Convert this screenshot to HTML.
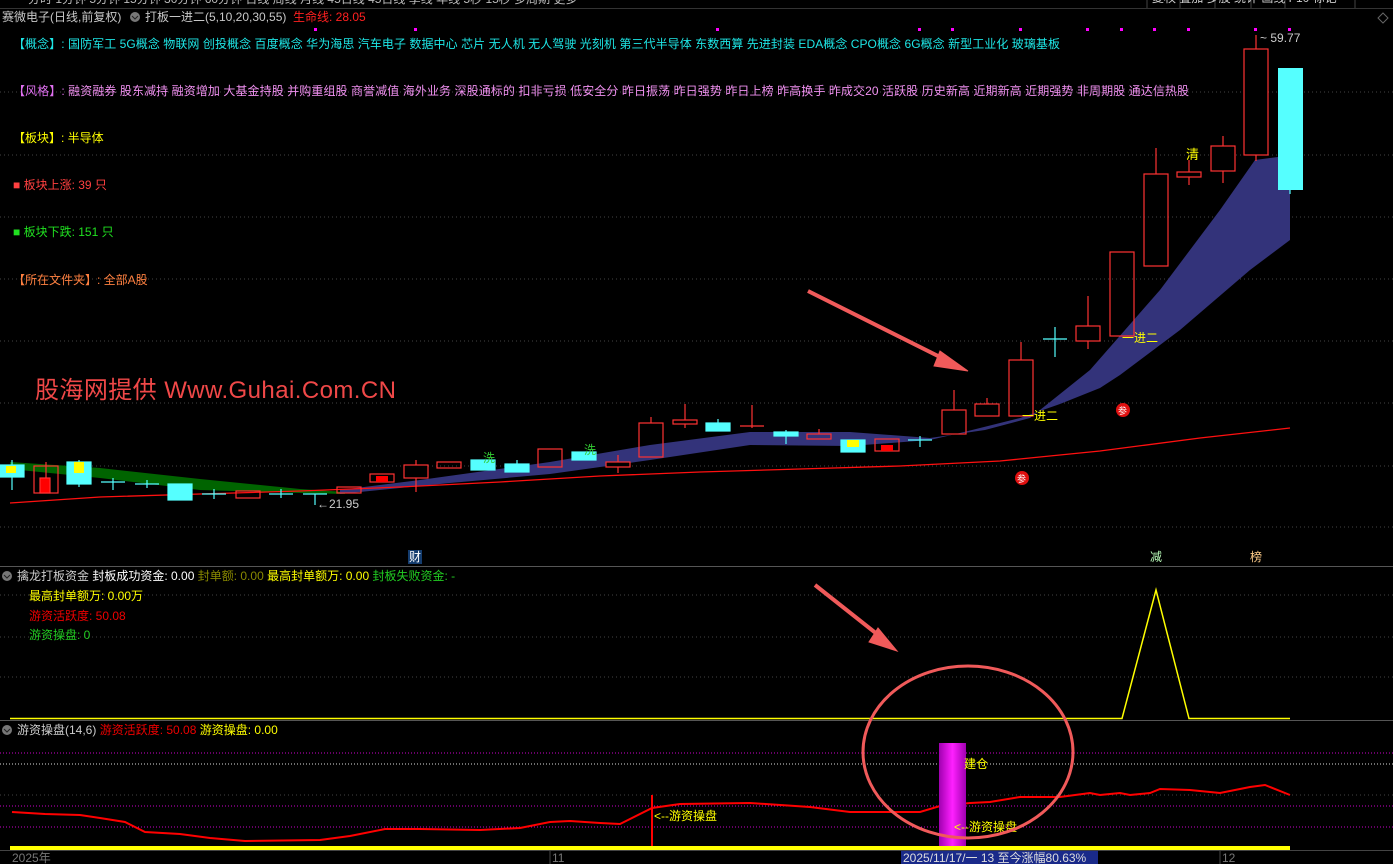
<!DOCTYPE html>
<html><head><meta charset="utf-8"><style>
html,body{margin:0;padding:0;background:#000;width:1393px;height:864px;overflow:hidden}
svg{display:block}
text{font-family:"Liberation Sans","Noto Sans CJK SC",sans-serif;font-size:12px}
</style></head><body>
<svg width="1393" height="864" xmlns="http://www.w3.org/2000/svg">
<rect width="1393" height="864" fill="#000"/>
<line x1="0" y1="8.5" x2="1393" y2="8.5" stroke="#333"/>
<text x="28" y="3" fill="#bbb">分时  1分钟  5分钟  15分钟  30分钟  60分钟  日线  周线  月线  45日线  45日线  季线  年线  5秒  15秒  多周期  更多</text>
<g stroke="#444"><line x1="1147" y1="0" x2="1147" y2="8"/><line x1="1180" y1="0" x2="1180" y2="8"/><line x1="1215" y1="0" x2="1215" y2="8"/><line x1="1251" y1="0" x2="1251" y2="8"/><line x1="1285" y1="0" x2="1285" y2="8"/><line x1="1320" y1="0" x2="1320" y2="8"/><line x1="1355" y1="0" x2="1355" y2="8"/></g>
<text x="1152" y="2" fill="#ccc">复权  叠加  多股  统计  画线  F10  标记</text>
<path d="M1383 13 l5 5 -5 5 -5 -5z" fill="none" stroke="#666"/>
<text x="2" y="21" fill="#c8c8c8">赛微电子(日线,前复权)</text>
<circle cx="135" cy="17" r="5" fill="#777"/><path d="M132 16 l3 3 3-3" stroke="#222" fill="none"/>
<text x="145" y="21" fill="#c8c8c8">打板一进二(5,10,20,30,55)</text>
<text x="293" y="21" fill="#ff2020">生命线: 28.05</text>
<g stroke="#444" stroke-dasharray="1,3">
<line x1="0" y1="92" x2="1393" y2="92"/><line x1="0" y1="155" x2="1393" y2="155"/><line x1="0" y1="217" x2="1393" y2="217"/><line x1="0" y1="279" x2="1393" y2="279"/><line x1="0" y1="341" x2="1393" y2="341"/><line x1="0" y1="403" x2="1393" y2="403"/><line x1="0" y1="466" x2="1393" y2="466"/><line x1="0" y1="527" x2="1393" y2="527"/>
<line x1="0" y1="595" x2="1393" y2="595"/><line x1="0" y1="637" x2="1393" y2="637"/><line x1="0" y1="677" x2="1393" y2="677"/>
<line x1="0" y1="795" x2="1393" y2="795"/>
</g>
<text x="13" y="48" fill="#1ee6e6" textLength="1047">【概念】: 国防军工 5G概念 物联网 创投概念 百度概念 华为海思 汽车电子 数据中心 芯片 无人机 无人驾驶 光刻机 第三代半导体 东数西算 先进封装 EDA概念 CPO概念 6G概念 新型工业化 玻璃基板</text>
<text x="13" y="95" fill="#e070f0" textLength="1176">【风格】: <tspan fill="#f090f0">融资融券 股东减持 融资增加 大基金持股 并购重组股 商誉减值 海外业务 深股通标的 扣非亏损 低安全分 昨日振荡 昨日强势 昨日上榜 昨高换手 昨成交20 活跃股 历史新高 近期新高 近期强势 非周期股 通达信热股</tspan></text>
<text x="13" y="142" fill="#ffff00">【板块】: 半导体</text>
<text x="13" y="189" fill="#ff4040">■ 板块上涨: 39 只</text>
<text x="13" y="236" fill="#20e020">■ 板块下跌: 151 只</text>
<text x="13" y="284" fill="#ff8040">【所在文件夹】: 全部A股</text>
<text x="35" y="398" fill="#f04848" style="font-size:24px" textLength="361">股海网提供 Www.Guhai.Com.CN</text>
<g fill="#ff00ff"><rect x="314" y="28" width="3" height="3"/><rect x="414" y="28" width="3" height="3"/><rect x="716" y="28" width="3" height="3"/><rect x="918" y="28" width="3" height="3"/><rect x="951" y="28" width="3" height="3"/><rect x="1019" y="28" width="3" height="3"/><rect x="1086" y="28" width="3" height="3"/><rect x="1120" y="28" width="3" height="3"/><rect x="1153" y="28" width="3" height="3"/><rect x="1187" y="28" width="3" height="3"/><rect x="1254" y="28" width="3" height="3"/><rect x="1288" y="28" width="3" height="3"/></g>
<polygon fill="#006400" points="10,462 100,468 200,479 300,489 345,492 345,494 300,493 200,490 100,478 10,469"/>
<polygon fill="#33337a" points="340,490 420,480 550,462 650,445 750,432 850,432 930,438 985,430 1030,418 1090,370 1160,290 1220,210 1255,160 1278,157 1290,155 1290,240 1250,270 1180,330 1120,375 1100,388 1060,404 1020,418 960,433 930,440 850,446 750,445 650,460 550,474 450,483 340,494"/>
<polyline fill="none" stroke="#ff1010" stroke-width="1.3" points="10,503 100,497 200,494 300,491 400,487 500,482 600,476 700,472 800,469 900,466 1000,461 1100,451 1200,438 1290,428"/>
<g stroke-width="1.2">
<g stroke="#5ff"><line x1="12" y1="460" x2="12" y2="490"/><rect x="0" y="465" width="24" height="12" fill="#5ff"/></g><rect x="6" y="466" width="10" height="7" fill="#ff0"/>
<g stroke="#f33"><line x1="46" y1="462" x2="46" y2="493"/><rect x="34" y="466" width="24" height="27" fill="none"/><rect x="40" y="478" width="10" height="15" fill="#f00"/></g>
<g stroke="#5ff"><line x1="79" y1="460" x2="79" y2="487"/><rect x="67" y="462" width="24" height="22" fill="#5ff"/></g><rect x="74" y="462" width="10" height="11" fill="#ff0"/>
<g stroke="#5ff"><line x1="113" y1="478" x2="113" y2="490"/><line x1="101" y1="482" x2="125" y2="482"/>
<line x1="147" y1="480" x2="147" y2="488"/><line x1="135" y1="484" x2="159" y2="484"/>
<rect x="168" y="484" width="24" height="16" fill="#5ff"/>
<line x1="214" y1="489" x2="214" y2="499"/><line x1="202" y1="494" x2="226" y2="494"/></g>
<rect x="236" y="491" width="24" height="7" fill="none" stroke="#f33"/>
<g stroke="#5ff"><line x1="281" y1="489" x2="281" y2="498"/><line x1="269" y1="494" x2="293" y2="494"/>
<line x1="315" y1="494" x2="315" y2="505"/><line x1="303" y1="494" x2="327" y2="494"/></g>
<text x="317" y="508" fill="#ccc">←21.95</text>
<g stroke="#f33" fill="none"><rect x="337" y="487" width="24" height="6"/>
<rect x="370" y="474" width="24" height="8"/></g><rect x="376" y="476" width="12" height="6" fill="#f00"/>
<g stroke="#f33" fill="none"><line x1="416" y1="460" x2="416" y2="492"/><rect x="404" y="465" width="24" height="13" fill="#000"/>
<rect x="437" y="462" width="24" height="6"/></g>
<g stroke="#5ff" fill="#5ff"><rect x="471" y="460" width="24" height="10"/><rect x="505" y="464" width="24" height="8"/><rect x="572" y="452" width="24" height="8"/><line x1="517" y1="460" x2="517" y2="464"/></g>
<text x="483" y="462" fill="#3c3">洗</text><text x="584" y="454" fill="#3c3">洗</text>
<g stroke="#f33" fill="none"><rect x="538" y="449" width="24" height="18"/>
<line x1="618" y1="455" x2="618" y2="473"/><rect x="606" y="462" width="24" height="5" fill="#000"/>
<line x1="651" y1="417" x2="651" y2="423"/><rect x="639" y="423" width="24" height="34"/>
<line x1="685" y1="404" x2="685" y2="428"/><rect x="673" y="420" width="24" height="4" fill="#000"/>
<line x1="752" y1="405" x2="752" y2="428"/><line x1="740" y1="426" x2="764" y2="426"/>
<line x1="819" y1="429" x2="819" y2="434"/><rect x="807" y="434" width="24" height="5"/></g>
<g stroke="#5ff" fill="#5ff"><rect x="706" y="423" width="24" height="8"/><line x1="718" y1="419" x2="718" y2="423"/>
<rect x="774" y="432" width="24" height="4"/><line x1="786" y1="430" x2="786" y2="444"/>
<rect x="841" y="440" width="24" height="12"/></g><rect x="847" y="440" width="12" height="7" fill="#ff0"/>
<g stroke="#f33" fill="none"><rect x="875" y="439" width="24" height="12"/></g><rect x="881" y="445" width="12" height="6" fill="#f00"/>
<g stroke="#5ff"><line x1="920" y1="436" x2="920" y2="447"/><line x1="908" y1="440" x2="932" y2="440"/>
<line x1="1055" y1="327" x2="1055" y2="357"/><line x1="1043" y1="339" x2="1067" y2="339"/></g>
<g stroke="#f33" fill="none">
<line x1="954" y1="390" x2="954" y2="410"/><rect x="942" y="410" width="24" height="24"/>
<line x1="987" y1="398" x2="987" y2="404"/><rect x="975" y="404" width="24" height="12"/>
<line x1="1021" y1="342" x2="1021" y2="360"/><rect x="1009" y="360" width="24" height="56"/>
<line x1="1088" y1="296" x2="1088" y2="349"/><rect x="1076" y="326" width="24" height="15" fill="#000"/>
<rect x="1110" y="252" width="24" height="84"/>
<line x1="1156" y1="148" x2="1156" y2="174"/><rect x="1144" y="174" width="24" height="92"/>
<line x1="1189" y1="160" x2="1189" y2="185"/><rect x="1177" y="172" width="24" height="5" fill="#000"/>
<line x1="1223" y1="136" x2="1223" y2="183"/><rect x="1211" y="146" width="24" height="25" fill="#000"/>
<line x1="1256" y1="35" x2="1256" y2="161"/><rect x="1244" y="49" width="24" height="106" fill="#000"/></g>
<line x1="1290" y1="190" x2="1290" y2="194" stroke="#5ff"/><rect x="1278" y="68" width="25" height="122" fill="#5ff"/>
</g>
<text x="1186" y="159" fill="#ff0" style="font-size:13px">清</text>
<text x="1260" y="42" fill="#ccc">~ 59.77</text>
<text x="1022" y="420" fill="#ff0">一进二</text><text x="1122" y="342" fill="#ff0">一进二</text>
<g><circle cx="1123" cy="410" r="7" fill="#e01010"/><text x="1118" y="414" fill="#fff" style="font-size:9px">参</text>
<circle cx="1022" cy="478" r="7" fill="#e01010"/><text x="1017" y="482" fill="#fff" style="font-size:9px">参</text></g>
<g stroke="#f05a5a" stroke-width="4" fill="#f05a5a">
<line x1="808" y1="291" x2="948" y2="361"/><polygon points="968,371 940,351 934,366" stroke-width="1"/>
<line x1="815" y1="585" x2="882" y2="638"/><polygon points="897,651 878,628 869,642" stroke-width="1"/>
</g>
<line x1="0" y1="566.5" x2="1393" y2="566.5" stroke="#555"/>
<rect x="408" y="550" width="14" height="14" fill="#143c6e"/><text x="409" y="561" fill="#fff">财</text>
<text x="1150" y="561" fill="#bfb">减</text><text x="1250" y="561" fill="#fc8">榜</text>
<circle cx="7" cy="576" r="5" fill="#777"/><path d="M4 575 l3 3 3-3" stroke="#222" fill="none"/>
<text x="17" y="580" fill="#ccc">擒龙打板资金 <tspan fill="#fff">封板成功资金: 0.00</tspan> <tspan fill="#888800">封单额: 0.00</tspan> <tspan fill="#ff0">最高封单额万: 0.00</tspan> <tspan fill="#2c2">封板失败资金: -</tspan></text>
<text x="29" y="600" fill="#ff0">最高封单额万: 0.00万</text>
<text x="29" y="620" fill="#e00">游资活跃度: 50.08</text>
<text x="29" y="639" fill="#2c2">游资操盘: 0</text>
<polyline fill="none" stroke="#ff0" stroke-width="1.5" points="10,718.5 1122,718.5 1156,590 1189,718.5 1290,718.5"/>
<line x1="0" y1="720.5" x2="1393" y2="720.5" stroke="#555"/>
<circle cx="7" cy="730" r="5" fill="#777"/><path d="M4 729 l3 3 3-3" stroke="#222" fill="none"/>
<text x="17" y="734" fill="#ccc">游资操盘(14,6) <tspan fill="#e00">游资活跃度: 50.08</tspan> <tspan fill="#ff0">游资操盘: 0.00</tspan></text>
<g stroke-dasharray="1,2"><line x1="0" y1="753" x2="1393" y2="753" stroke="#c0c"/><line x1="0" y1="764" x2="1393" y2="764" stroke="#ddd"/><line x1="0" y1="806" x2="1393" y2="806" stroke="#c0c"/><line x1="0" y1="827" x2="1393" y2="827" stroke="#c0c"/></g>
<polyline fill="none" stroke="#f00" stroke-width="2" points="12,812 45,814 80,815 100,818 125,822 145,832 180,834 210,838 245,841 320,840 350,836 385,829 420,829 480,830 520,828 550,822 570,821 600,823 620,824 652,808 680,804 750,803 810,807 850,812 920,812 940,806 970,803 990,802 1020,797 1060,797 1090,793 1100,795 1120,793 1130,795 1150,793 1160,789 1190,790 1220,793 1250,787 1265,785 1290,795"/>
<line x1="652" y1="795" x2="652" y2="848" stroke="#f00" stroke-width="2"/>
<text x="654" y="820" fill="#ff0">&lt;--游资操盘</text>
<defs><linearGradient id="mg" x1="0" x2="1"><stop offset="0" stop-color="#a000b0"/><stop offset="0.5" stop-color="#ff20ff"/><stop offset="1" stop-color="#a000b0"/></linearGradient></defs>
<rect x="939" y="743" width="27" height="105" fill="url(#mg)"/>
<text x="964" y="768" fill="#ff0">建仓</text>
<text x="954" y="831" fill="#ff0">&lt;--游资操盘</text>
<rect x="10" y="846" width="1280" height="4" fill="#ff0"/>
<ellipse cx="968" cy="752" rx="105" ry="86" fill="none" stroke="#f05a5a" stroke-width="3"/>
<line x1="0" y1="850.5" x2="1393" y2="850.5" stroke="#444"/>
<line x1="550" y1="851" x2="550" y2="864" stroke="#444"/><line x1="1220" y1="851" x2="1220" y2="864" stroke="#444"/>
<text x="12" y="862" fill="#777">2025年</text><text x="552" y="862" fill="#777">11</text><text x="1222" y="862" fill="#777">12</text>
<rect x="901" y="851" width="197" height="13" fill="#1a2a8a"/>
<text x="903" y="862" fill="#ddd">2025/11/17/一 13 至今涨幅80.63%</text>
</svg>
</body></html>
